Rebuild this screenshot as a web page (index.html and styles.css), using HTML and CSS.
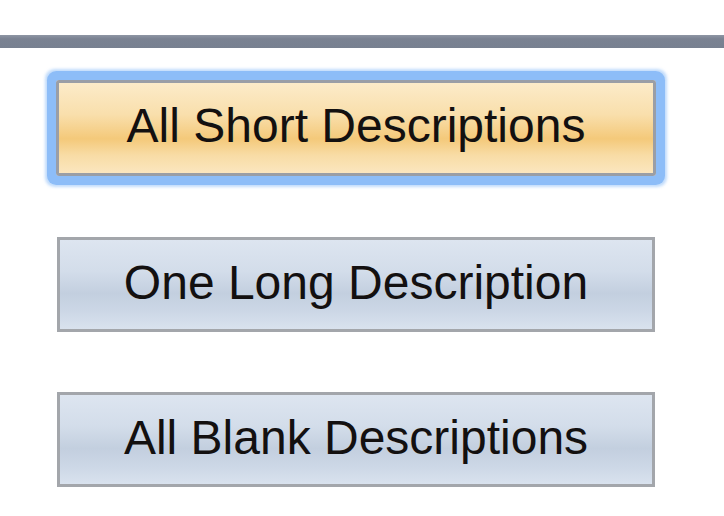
FILE: index.html
```html
<!DOCTYPE html>
<html>
<head>
<meta charset="utf-8">
<link rel="stylesheet" href="styles.css">
</head>
<body>
<div class="topbar"></div>
<div class="buttons">
  <button class="btn btn-active">All Short Descriptions</button>
  <button class="btn btn-plain">One Long Description</button>
  <button class="btn btn-plain">All Blank Descriptions</button>
</div>
</body>
</html>
```
FILE: styles.css
```css
html, body {
  margin: 0;
  padding: 0;
  background: #ffffff;
}
body {
  width: 724px;
  height: 516px;
  overflow: hidden;
  font-family: "Liberation Sans", Arial, sans-serif;
}
.topbar {
  margin-top: 35px;
  height: 13px;
  background: linear-gradient(to bottom, #8f96a4 0%, #7a8292 30%, #778090 100%);
}
.buttons {
  display: flex;
  flex-direction: column;
  align-items: flex-start;
  padding: 32px 0 0 56px;
}
.btn {
  box-sizing: border-box;
  display: flex;
  align-items: center;
  justify-content: center;
  font-family: "Liberation Sans", Arial, sans-serif;
  font-size: 48px;
  color: #131010;
  border: 3px solid #9a9ea6;
  padding: 0 0 5px 0;
  margin: 0;
  letter-spacing: 0;
}
.btn-active {
  width: 600px;
  height: 96px;
  background: linear-gradient(to bottom, #fcebc9 0%, #f9dfac 35%, #f4c97a 62%, #f8dca5 80%, #fbe6bf 100%);
  box-shadow: 0 0 0 9px #8dbdf8, 0 0 3px 11px rgba(141, 189, 248, 0.55);
  border-radius: 3px;
}
.btn-plain {
  width: 598px;
  height: 95px;
  margin-left: 1px;
  background: linear-gradient(to bottom, #dde5f0 0%, #d3ddea 35%, #c3cfdf 60%, #ccd7e6 80%, #d9e2ee 100%);
  border-color: #a3a6ab;
}
.btn-plain:nth-child(2) {
  margin-top: 61px;
}
.btn-plain:nth-child(3) {
  margin-top: 60px;
}
```
